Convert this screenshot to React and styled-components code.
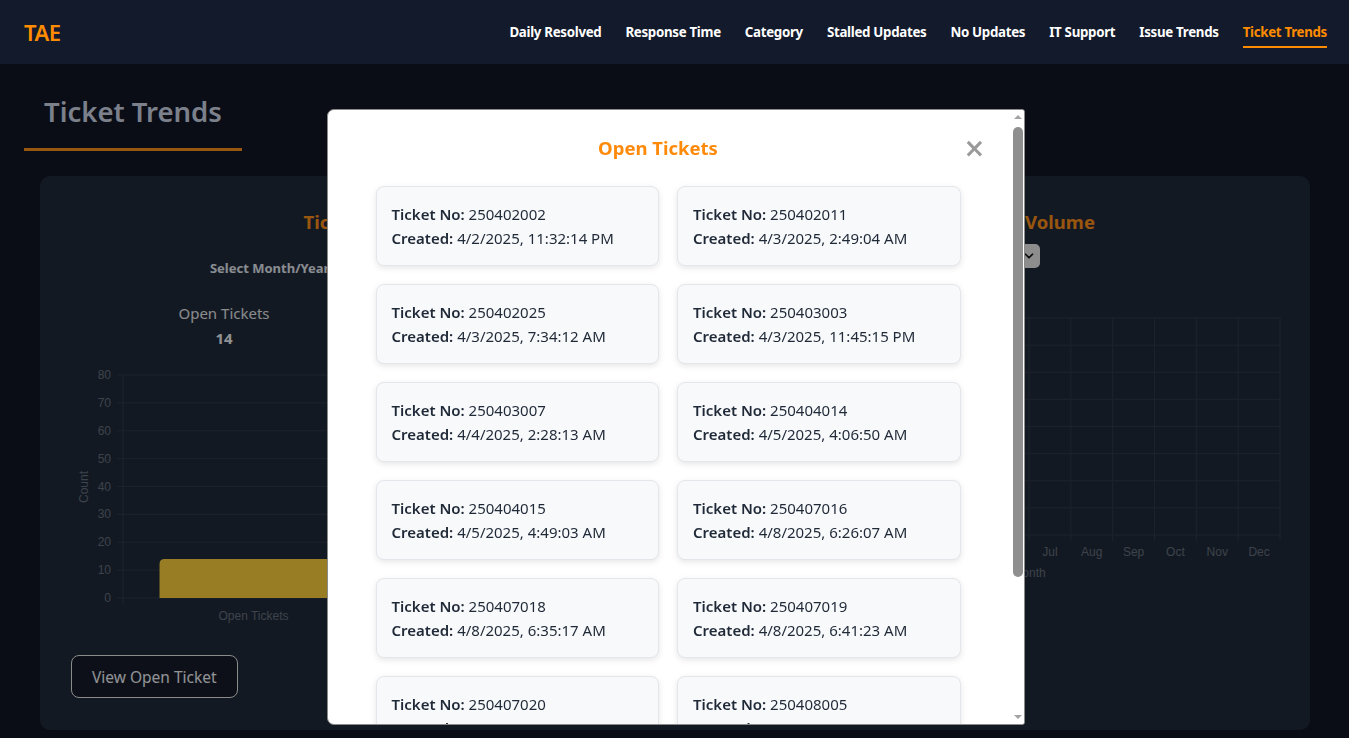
import React from "react";
import styled, { createGlobalStyle } from "styled-components";
import { ChevronDown } from "lucide-react";

const GlobalStyle = createGlobalStyle`
  * { box-sizing: border-box; }
  body {
    margin: 0;
    background: #111723;
    font-family: "Noto Sans", "Open Sans", sans-serif;
    overflow: hidden;
  }
`;

const Nav = styled.nav`
  position: relative;
  z-index: 20;
  height: 64px;
  background: #121a2b;
  display: flex;
  align-items: center;
  justify-content: space-between;
  padding: 0 22px 0 24px;
`;

const Logo = styled.div`
  color: #ff8c00;
  font-size: 22px;
  font-weight: 600;
  letter-spacing: -0.5px;
`;

const NavLinks = styled.div`
  display: flex;
  gap: 24px;
`;

const NavLink = styled.a`
  color: ${(p) => (p.$active ? "#ff8c00" : "#ffffff")};
  font-size: 13.3px;
  font-weight: 700;
  letter-spacing: -0.3px;
  padding: 4px 0 5px;
  border-bottom: 2px solid ${(p) => (p.$active ? "#ff8c00" : "transparent")};
  margin-top: 3px;
  cursor: pointer;
`;

const Main = styled.main`
  padding: 24px 24px 0;
`;

const PageTitle = styled.h1`
  display: inline-block;
  margin: 0;
  padding: 6px 20px 18px;
  font-size: 27.5px;
  font-weight: 600;
  line-height: 36px;
  color: #cdd6e8;
  border-bottom: 3px solid #ff8f19;
`;

const Panel = styled.section`
  margin: 25px 15px 0 16px;
  background: #212b3a;
  border-radius: 10px;
  padding: 32px 30px 32px 31px;
  display: grid;
  grid-template-columns: 1fr 1fr;
  gap: 40px;
  height: 554px;
`;

const Column = styled.div`
  display: flex;
  flex-direction: column;
  align-items: center;
`;

const ChartTitle = styled.h2`
  margin: 0;
  font-size: 18.5px;
  line-height: 28px;
  font-weight: 700;
  color: #ff8f19;
`;

const FilterRow = styled.div`
  display: flex;
  align-items: center;
  gap: 8px;
  margin-top: ${(p) => p.$top || 20}px;
`;

const FilterLabel = styled.span`
  font-size: 13px;
  font-weight: 700;
  color: #e5eaf2;
`;

const SelectBox = styled.div`
  width: ${(p) => p.$width}px;
  height: 24px;
  border-radius: 5px;
  background: #ebebeb;
  color: #111;
  font-size: 13px;
  display: flex;
  align-items: center;
  justify-content: space-between;
  padding: 0 4px 0 8px;
`;

const Stats = styled.div`
  display: flex;
  gap: 70px;
  margin-top: 22px;
  align-self: flex-start;
  margin-left: 98px;
`;

const Stat = styled.div`
  width: 110px;
  text-align: center;
  color: #e5e7eb;
  font-size: 15px;
  line-height: 22px;
  strong {
    display: block;
    margin-top: 3px;
    font-size: 15px;
    color: #f0f3f7;
  }
`;

const ChartSvg = styled.svg`
  display: block;
  margin-top: ${(p) => p.$top}px;
  font-family: "Liberation Sans", Arial, sans-serif;
  font-size: 12px;
`;

const ViewButton = styled.button`
  align-self: flex-start;
  margin-top: 25px;
  height: 43px;
  padding: 0 20px;
  border: 1px solid #e8e8e8;
  border-radius: 8px;
  background: #161c28;
  color: #f0f4fa;
  font-family: inherit;
  font-size: 15.5px;
  cursor: pointer;
`;

const Overlay = styled.div`
  position: fixed;
  top: 64px;
  left: 0;
  right: 0;
  bottom: 0;
  z-index: 10;
  background: rgba(0, 0, 0, 0.4);
  display: flex;
  justify-content: center;
  align-items: flex-start;
  padding-top: 45px;
  padding-left: 2px;
`;

const ModalFrame = styled.div`
  position: relative;
  width: 698px;
  height: 616px;
  background: #ffffff;
  border: 1px solid #8a8a8a;
  border-radius: 7px 3px 3px 7px;
  overflow: hidden;
`;

const ModalBody = styled.div`
  height: 100%;
  overflow-y: auto;
  scrollbar-width: none;
  padding: 24px 63px 44px 48px;
`;

const ScrollBar = styled.div`
  position: absolute;
  top: 0;
  right: 0;
  bottom: 0;
  width: 12px;
  background: #ffffff;
  display: flex;
  flex-direction: column;
  align-items: center;
`;

const Arrow = styled.div`
  height: 14px;
  width: 12px;
  display: flex;
  align-items: center;
  justify-content: center;
  &::after {
    content: "";
    border-left: 4px solid transparent;
    border-right: 4px solid transparent;
    ${(p) => (p.$down ? "border-top" : "border-bottom")}: 4px solid #a3a3a3;
  }
`;

const Track = styled.div`
  flex: 1;
  width: 100%;
  padding: 3px 1px 0;
`;

const Thumb = styled.div`
  height: 450px;
  border-radius: 5px;
  background: #8f8f8f;
`;

const ModalHeader = styled.div`
  position: relative;
  padding-right: 20px;
  margin-bottom: 24px;
  text-align: center;
`;

const ModalTitle = styled.h3`
  margin: 0;
  font-size: 18.5px;
  line-height: 28px;
  font-weight: 700;
  color: #ff8a0a;
`;

const CloseButton = styled.button`
  position: absolute;
  right: -26px;
  top: 0;
  width: 24px;
  height: 28px;
  padding: 0;
  border: none;
  background: none;
  color: #9a9a9a;
  font-family: "DejaVu Sans", sans-serif;
  font-size: 26px;
  font-weight: 700;
  line-height: 28px;
  cursor: pointer;
`;

const TicketGrid = styled.div`
  display: grid;
  grid-template-columns: 1fr 1fr;
  gap: 18px;
`;

const TicketCard = styled.div`
  background: #f8f9fb;
  border: 1px solid #e3e6ea;
  border-radius: 8px;
  box-shadow: 0 2px 6px rgba(0, 0, 0, 0.1);
  padding: 15px;
  font-size: 15px;
  line-height: 24px;
  color: #1f2937;
  white-space: nowrap;
  b {
    font-weight: 600;
  }
`;

const links = [
  "Daily Resolved",
  "Response Time",
  "Category",
  "Stalled Updates",
  "No Updates",
  "IT Support",
  "Issue Trends",
  "Ticket Trends",
];

const tickets = [
  ["250402002", "4/2/2025, 11:32:14 PM"],
  ["250402011", "4/3/2025, 2:49:04 AM"],
  ["250402025", "4/3/2025, 7:34:12 AM"],
  ["250403003", "4/3/2025, 11:45:15 PM"],
  ["250403007", "4/4/2025, 2:28:13 AM"],
  ["250404014", "4/5/2025, 4:06:50 AM"],
  ["250404015", "4/5/2025, 4:49:03 AM"],
  ["250407016", "4/8/2025, 6:26:07 AM"],
  ["250407018", "4/8/2025, 6:35:17 AM"],
  ["250407019", "4/8/2025, 6:41:23 AM"],
  ["250407020", "4/8/2025, 7:08:33 AM"],
  ["250408005", "4/9/2025, 5:08:33 AM"],
  ["250408011", "4/9/2025, 9:14:52 AM"],
  ["250409002", "4/9/2025, 11:27:40 PM"],
];

const months = ["Jan", "Feb", "Mar", "Apr", "May", "Jun", "Jul", "Aug", "Sep", "Oct", "Nov", "Dec"];

const GRID = "#303a49";
const LABEL = "#66707f";

const StatusChart = () => {
  const left = 52;
  const right = 574;
  const top = 15;
  const bottom = 238;
  const y = (v) => bottom - (v / 80) * (bottom - top);
  const cat = (right - left) / 2;
  const bars = [
    ["Open Tickets", 14, "#fdd03e"],
    ["Closed Tickets", 58, "#5fb87a"],
  ];
  return (
    <ChartSvg width="585" height="270" $top={11}>
      {[0, 10, 20, 30, 40, 50, 60, 70, 80].map((v) => (
        <g key={v}>
          <line x1={left - 6} x2={right} y1={y(v)} y2={y(v)} stroke={GRID} />
          <text x={left - 12} y={y(v) + 4} textAnchor="end" fill={LABEL}>
            {v}
          </text>
        </g>
      ))}
      {[0, 1, 2].map((i) => (
        <line key={i} x1={left + i * cat} x2={left + i * cat} y1={top} y2={bottom + 6} stroke={GRID} />
      ))}
      {bars.map(([name, v, color], i) => {
        const cx = left + cat * (i + 0.5);
        const w = cat * 0.72;
        const h = bottom - y(v);
        const r = 5;
        const x0 = cx - w / 2;
        return (
          <g key={name}>
            <path
              d={`M${x0} ${bottom} V${bottom - h + r} Q${x0} ${bottom - h} ${x0 + r} ${bottom - h} H${x0 + w - r} Q${x0 + w} ${bottom - h} ${x0 + w} ${bottom - h + r} V${bottom} Z`}
              fill={color}
            />
            <text x={cx} y={bottom + 22} textAnchor="middle" fill={LABEL}>
              {name}
            </text>
          </g>
        );
      })}
      <text transform="translate(17 127) rotate(-90)" textAnchor="middle" fill={LABEL}>
        Count
      </text>
    </ChartSvg>
  );
};

const VolumeChart = () => {
  const left = 82;
  const right = 584;
  const top = 18;
  const bottom = 235;
  const step = (bottom - top) / 8;
  const cat = (right - left) / 12;
  return (
    <ChartSvg width="585" height="290" $top={32}>
      {Array.from({ length: 9 }, (_, i) => (
        <g key={i}>
          <line x1={left - 6} x2={right} y1={bottom - i * step} y2={bottom - i * step} stroke={GRID} />
          <text x={left - 12} y={bottom - i * step + 4} textAnchor="end" fill={LABEL}>
            {i * 2}
          </text>
        </g>
      ))}
      {Array.from({ length: 13 }, (_, i) => (
        <line key={i} x1={left + i * cat} x2={left + i * cat} y1={top} y2={bottom + 6} stroke={GRID} />
      ))}
      <rect x={left + cat * 3 + cat * 0.14} y={bottom - step * 7} width={cat * 0.72} height={step * 7} fill="#fdd03e" />
      {months.map((m, i) => (
        <text key={m} x={left + cat * (i + 0.5)} y={bottom + 21} textAnchor="middle" fill={LABEL}>
          {m}
        </text>
      ))}
      <text x={(left + right) / 2} y={bottom + 42} textAnchor="middle" fill={LABEL}>
        Month
      </text>
      <text transform="translate(20 126) rotate(-90)" textAnchor="middle" fill={LABEL}>
        Count
      </text>
    </ChartSvg>
  );
};

const App = () => {
  return (
    <>
      <GlobalStyle />
      <Nav>
        <Logo>TAE</Logo>
        <NavLinks>
          {links.map((l) => (
            <NavLink key={l} $active={l === "Ticket Trends"}>
              {l}
            </NavLink>
          ))}
        </NavLinks>
      </Nav>
      <Main>
        <PageTitle>Ticket Trends</PageTitle>
        <Panel>
          <Column>
            <ChartTitle>Ticket Status</ChartTitle>
            <FilterRow>
              <FilterLabel>Select Month/Year:</FilterLabel>
              <SelectBox $width={176}>
                April 2025 <ChevronDown size={14} strokeWidth={3} />
              </SelectBox>
            </FilterRow>
            <Stats>
              <Stat>
                Open Tickets
                <strong>14</strong>
              </Stat>
              <Stat>
                Closed Tickets
                <strong>58</strong>
              </Stat>
            </Stats>
            <StatusChart />
            <ViewButton>View Open Ticket</ViewButton>
          </Column>
          <Column>
            <ChartTitle>Monthly Ticket Volume</ChartTitle>
            <FilterRow $top={8}>
              <SelectBox $width={102}>
                2025 <ChevronDown size={14} strokeWidth={3} />
              </SelectBox>
            </FilterRow>
            <VolumeChart />
          </Column>
        </Panel>
      </Main>
      <Overlay>
        <ModalFrame>
          <ModalBody>
            <ModalHeader>
              <ModalTitle>Open Tickets</ModalTitle>
              <CloseButton aria-label="Close">×</CloseButton>
            </ModalHeader>
            <TicketGrid>
              {tickets.map(([no, created]) => (
                <TicketCard key={no}>
                  <div>
                    <b>Ticket No:</b> {no}
                  </div>
                  <div>
                    <b>Created:</b> {created}
                  </div>
                </TicketCard>
              ))}
            </TicketGrid>
          </ModalBody>
          <ScrollBar>
            <Arrow />
            <Track>
              <Thumb />
            </Track>
            <Arrow $down />
          </ScrollBar>
        </ModalFrame>
      </Overlay>
    </>
  );
};

export default App;
